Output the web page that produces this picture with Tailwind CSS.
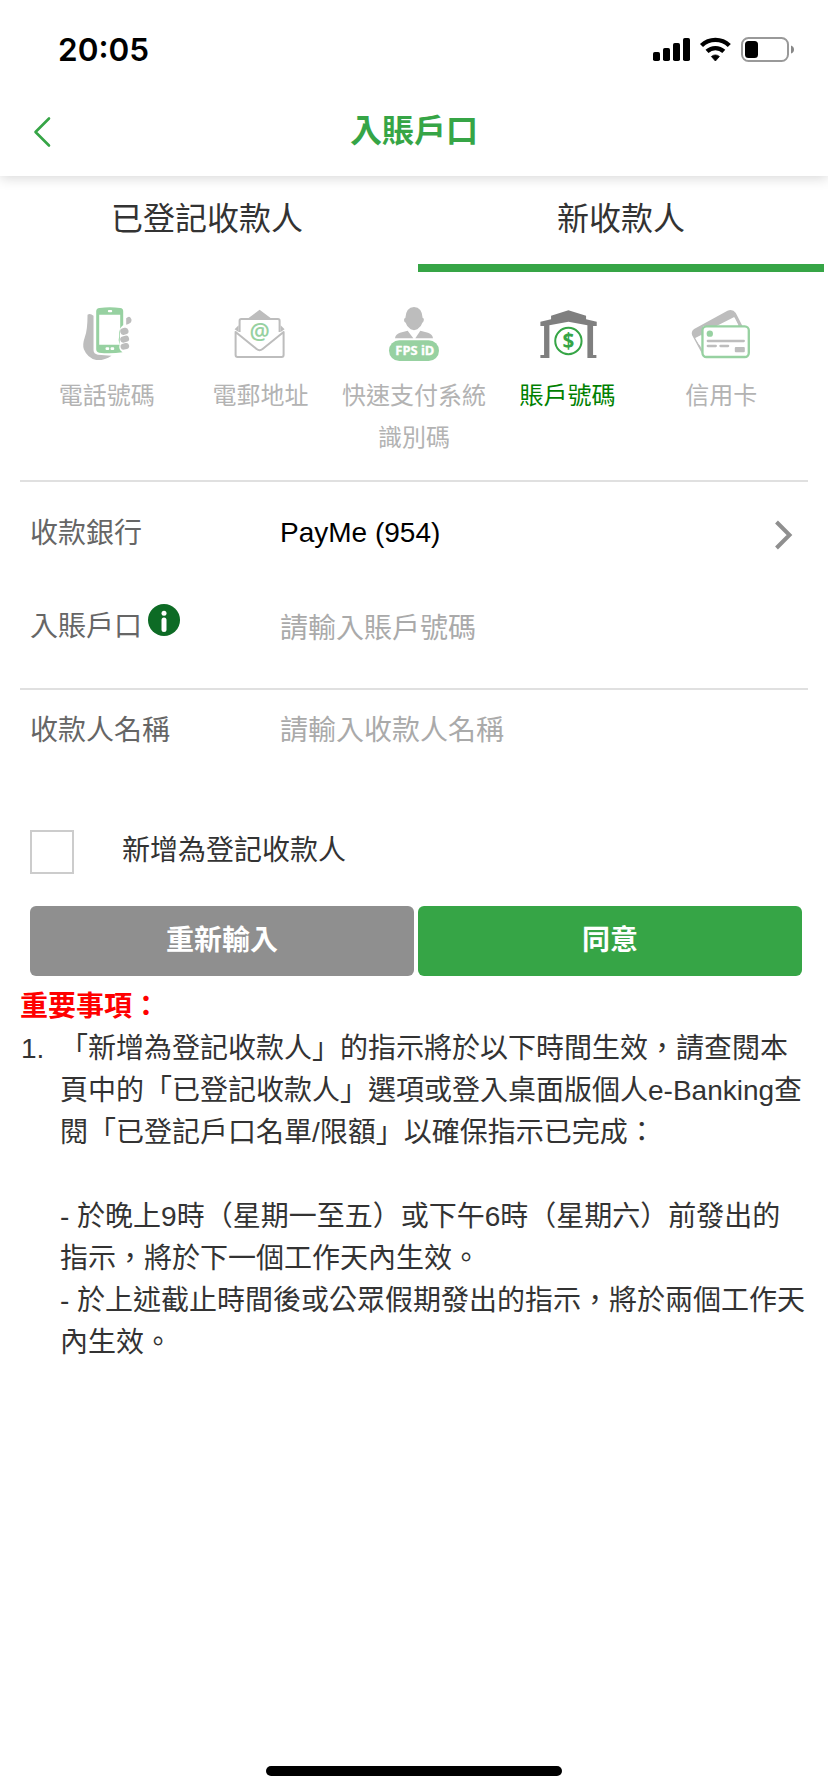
<!DOCTYPE html>
<html lang="zh-Hant">
<head>
<meta charset="utf-8">
<title>入賬戶口</title>
<script src="https://cdn.jsdelivr.net/npm/@tailwindcss/browser@4"></script>
</head>
<body class="bg-white">
<div class="flex h-[1792px] w-[828px] flex-col overflow-hidden bg-white font-['Liberation_Sans','Noto_Sans_CJK_TC',sans-serif] text-[28px] leading-[42px] text-[#333]">
  <header class="h-[176px] shrink-0 bg-white shadow-[0_2px_12px_rgba(0,0,0,0.16)]">
    <div class="flex h-[100px] items-center justify-between pl-[58px] pr-[34px]">
      <span class="font-['Inter',sans-serif] text-[31.5px] font-semibold text-black">20:05</span>
      <svg class="h-[30px] w-[142px]" viewBox="0 0 142 30">
        <g fill="#000">
          <rect x="1" y="17" width="7" height="9" rx="1.8"/><rect x="11" y="13" width="7" height="13" rx="1.8"/><rect x="21" y="8" width="7" height="18" rx="1.8"/><rect x="31" y="3" width="7" height="23" rx="1.8"/>
          <path d="M59.400 21.500a6 6 0 0 1 8 0L63.400 26z" stroke="#000" stroke-width="0.800"/>
        </g>
        <g fill="none" stroke="#000" stroke-width="4.400"><path d="M55 16.400a12.500 12.500 0 0 1 16.800 0"/><path d="M49.500 10.500a20 20 0 0 1 27.800 0"/></g>
        <rect x="90" y="3" width="46" height="23" rx="6.500" fill="#fff" stroke="#999" stroke-width="2"/>
        <rect x="93" y="6" width="13" height="17" rx="3.500"/>
        <path d="M139 10.500q3 1 3 4t-3 4z" fill="#888"/>
      </svg>
    </div>
    <div class="grid h-[64px] grid-cols-[100px_1fr_100px] items-center">
      <svg class="ml-[32px] h-[34px] w-[20px]" viewBox="0 0 20 34" fill="none" stroke="#36a546" stroke-width="2.600" stroke-linecap="round" stroke-linejoin="round"><path d="M17 3.500 3.500 17 17 30.500"/></svg>
      <h1 class="pb-[2px] text-center text-[32px] font-bold text-[#36a546]">入賬戶口</h1>
    </div>
  </header>

  <nav class="grid h-[96px] shrink-0 grid-cols-2 gap-2 px-1 text-center text-[32px]">
    <div class="border-b-8 border-transparent pt-[22px]">已登記收款人</div>
    <div class="border-b-8 border-[#36a546] pt-[22px]">新收款人</div>
  </nav>

  <section class="mx-[20px] grid h-[210px] shrink-0 grid-cols-5 border-b-2 border-[#e0e0e0] px-[10px] pt-[32px] text-center text-[24px] text-[#b3b3b3]">
    <div class="flex flex-col items-center">
      <svg class="mb-[7px] h-[64px] w-[64px]" viewBox="74.4 42 192 192">
        <path d="M112 74Q120 69 130 77V180Q130 192 143 194L184 197Q162 212 138 210Q112 205 101 178Q96 164 104 141Q112 120 112 74Z" fill="#bdbdbd"/>
        <path d="M148 54Q179 49 210 54Q219 55 219 64V105Q205 115 207 138Q203 150 208 165Q204 178 217 187Q180 192 147 188Q138 187 138 178V64Q138 55 148 54ZM147 74V164H208L210 118V74Z" fill="#97d1a1" fill-rule="evenodd"/>
        <rect x="173" y="60" width="13" height="7" rx="3" fill="#fff"/><rect x="166" y="172" width="11" height="8" rx="3" fill="#fff"/><rect x="181" y="172" width="11" height="8" rx="3" fill="#fff"/>
        <path d="M228 85Q236 77 241 83Q247 91 241 98Q235 103 228 104Z" fill="#bdbdbd"/>
        <g fill="#bdbdbd"><rect x="210" y="114" width="25" height="20" rx="10" transform="rotate(-15 222 124)"/><rect x="210" y="138" width="27" height="19" rx="9.500" transform="rotate(-15 223 148)"/><rect x="211" y="160" width="26" height="18" rx="9" transform="rotate(-15 224 169)"/></g>
      </svg>
      <span>電話號碼</span>
    </div>
    <div class="flex flex-col items-center">
      <svg class="mb-[7px] h-[64px] w-[64px]" viewBox="535.2 42 192 192">
        <path d="M597 84 630 59 663 84ZM567 106 555 118 567 126ZM693 106 705 118 693 126Z" fill="#bdbdbd"/>
        <path d="M570 126V92Q570 87 575 87H685Q690 87 690 92V126" fill="none" stroke="#bdbdbd" stroke-width="6"/>
        <path d="M558 126V195Q558 201 564 201H696Q702 201 702 195V126L639 177Q630 184 621 177Z" fill="#fff" stroke="#bdbdbd" stroke-width="6" stroke-linejoin="round"/>
        <text x="630" y="149" text-anchor="middle" font-family="Open Sans" font-weight="600" font-size="68" fill="#97d1a1">@</text>
      </svg>
      <span>電郵地址</span>
    </div>
    <div class="flex flex-col items-center">
      <svg class="mb-[7px] h-[64px] w-[64px]" viewBox="186 42 192 192">
        <path d="M282 51Q306 52 308 84Q313 84 311 92Q310 97 307 98Q304 110 292 118Q282 123 272 118Q260 110 257 98Q252 96 252 90Q252 84 256 84Q258 52 282 51Z" fill="#bdbdbd"/>
        <path d="M263 122 280 145H225Q226 133 240 128ZM301 122 286 145H339Q338 133 324 128Z" fill="#bdbdbd"/>
        <rect x="207" y="151" width="150" height="62" rx="31" fill="#97d1a1"/>
        <text x="226" y="195" textLength="117" lengthAdjust="spacingAndGlyphs" font-family="Open Sans" font-weight="700" font-size="37" fill="#fff" stroke="#fff" stroke-width="1">FPS iD</text>
      </svg>
      <span class="w-[153px]">快速支付系統<br>識別碼</span>
    </div>
    <div class="flex flex-col items-center text-[#008000]">
      <svg class="mb-[7px] h-[64px] w-[64px]" viewBox="106.8 42 192 192">
        <path d="M204 61 257 77V88L289 95V108H278V195H288V204H261V106L204 95 147 106V204H120V195H131V108H120V95L152 88V77Z" fill="#7f7f7f"/>
        <circle cx="204" cy="153" r="39.500" fill="none" stroke="#36a546" stroke-width="6"/>
        <text x="204" y="175" text-anchor="middle" font-family="Open Sans" font-weight="700" font-size="62" fill="#36a546">$</text>
      </svg>
      <span>賬戶號碼</span>
    </div>
    <div class="flex flex-col items-center">
      <svg class="mb-[7px] h-[64px] w-[64px]" viewBox="567.6 42 192 192">
        <path d="M583 117 683 62Q699 56 708 69L728 108 716 108 702 82 650 108H611L606 136 588 146 606 176V190L577 136Q573 124 583 117Z" fill="#bdbdbd"/>
        <path d="M586 144 604 135V162L598 164ZM665 106 704 82 716 106Z" fill="#fff"/>
        <rect x="608" y="109" width="139" height="92" rx="12" fill="#fff" stroke="#97d1a1" stroke-width="7"/>
        <circle cx="630" cy="131" r="9.500" fill="#97d1a1"/>
        <path d="M624 153H732M624 168H648M662 168H685" stroke="#bdbdbd" stroke-width="7" stroke-linecap="round"/>
        <rect x="705" y="171" width="30" height="16" rx="3" fill="#bdbdbd"/>
      </svg>
      <span>信用卡</span>
    </div>
  </section>

  <section class="mx-[20px] h-[208px] shrink-0 border-b-2 border-[#e0e0e0] pl-[10px] pr-[14px]">
    <div class="flex h-[104px] items-center">
      <span class="w-[250px] text-[#666]">收款銀行</span>
      <span class="grow pb-[2px] text-black">PayMe (954)</span>
      <svg class="mt-[2px] h-[30px] w-[20px]" viewBox="0 0 20 30" fill="none" stroke="#8f8f8f" stroke-width="4"><path d="M2.500 2 15.500 15 2.500 28"/></svg>
    </div>
    <div class="flex h-[82px] items-center">
      <span class="flex w-[250px] items-center text-[#666]">入賬戶口
        <svg class="mb-[14px] ml-[6px] h-[32px] w-[32px]" viewBox="0 0 32 32"><circle cx="16" cy="16" r="16" fill="#0d6b25"/><circle cx="16" cy="9.300" r="2.500" fill="#fff"/><rect x="13.500" y="13.500" width="5" height="14.500" rx="2.500" fill="#fff"/></svg>
      </span>
      <span class="mt-[4px] text-[#aaa]">請輸入賬戶號碼</span>
    </div>
  </section>

  <section class="flex h-[114px] shrink-0 px-[30px] pt-[20px]">
    <span class="w-[250px] text-[#666]">收款人名稱</span>
    <span class="text-[#aaa]">請輸入收款人名稱</span>
  </section>

  <section class="mb-[6px] flex h-[96px] shrink-0 items-center px-[30px]">
    <span class="h-[44px] w-[44px] border-2 border-[#ccc]"></span>
    <span class="ml-[48px] pb-[2px]">新增為登記收款人</span>
  </section>

  <section class="grid h-[70px] shrink-0 grid-cols-2 gap-1 pl-[30px] pr-[26px] text-center font-bold leading-[70px] text-white">
    <div class="rounded-[6px] bg-[#8f8f8f]">重新輸入</div>
    <div class="rounded-[6px] bg-[#36a546]">同意</div>
  </section>

  <main class="grow whitespace-nowrap px-[20px] pt-[10px]">
    <h2 class="font-bold text-[#f00]">重要事項：</h2>
    <div class="flex">
      <span class="w-[40px] pl-[1px]">1.</span>
      <p>「新增為登記收款人」的指示將於以下時間生效，請查閱本<br>頁中的「已登記收款人」選項或登入桌面版個人e-Banking查<br>閱「已登記戶口名單/限額」以確保指示已完成：<br><br>- 於晚上9時（星期一至五）或下午6時（星期六）前發出的<br>指示，將於下一個工作天內生效。<br>- 於上述截止時間後或公眾假期發出的指示，將於兩個工作天<br>內生效。</p>
    </div>
  </main>

  <footer class="flex h-[26px] shrink-0 justify-center">
    <div class="h-[10px] w-[296px] rounded-full bg-black"></div>
  </footer>
</div>
</body>
</html>
